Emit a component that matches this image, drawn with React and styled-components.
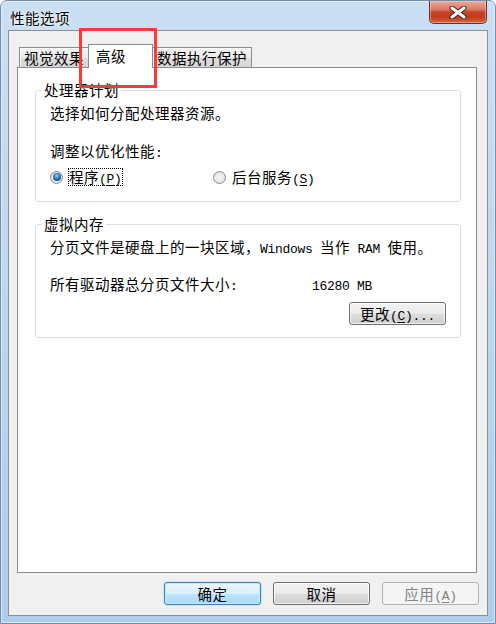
import React from 'react'
import styled, {createGlobalStyle, css} from 'styled-components'

const GlobalStyle = createGlobalStyle`
  html, body { margin:0; padding:0; background:#fff; }
  body {
    width:496px; height:624px; overflow:hidden;
    font-family:"Noto Sans CJK SC", "Microsoft YaHei", sans-serif;
  }
`;

const cjkText = css`
  font-family:"Noto Sans CJK SC", "Microsoft YaHei", sans-serif;
  font-size:14.5px;
  letter-spacing:.5px;
  color:#000;
  white-space:nowrap;
`;

const Window = styled.div`
  position:relative;
  box-sizing:border-box;
  width:496px;
  height:624px;
  display:flex;
  flex-direction:column;
  padding:0 7px 7px 7px;
  border:1px solid #6f8cab;
  border-radius:7px 7px 0 0;
  background:linear-gradient(180deg, #cadff3 0%, #c0d8f0 40%, #aecdec 100%);
  box-shadow:inset 0 0 0 1px rgba(255,255,255,.55);
`;

const TitleBar = styled.div`
  display:flex;
  align-items:flex-start;
  height:29px;
`;

const Title = styled.div`
  ${cjkText};
  margin:8px 0 0 2px;
  line-height:18px;
  text-shadow:0 0 6px rgba(255,255,255,.95), 0 0 2px rgba(255,255,255,.9);
`;

const CloseButton = styled.div`
  box-sizing:border-box;
  margin-left:auto;
  margin-right:1px;
  width:58px;
  height:23px;
  display:flex;
  align-items:center;
  justify-content:center;
  border:1px solid #6b3127;
  border-top:none;
  border-radius:0 0 5px 5px;
  background:linear-gradient(180deg, #e9aa9b 0%, #dc7c66 38%, #c7452a 50%, #c23a1f 72%, #d8623f 100%);
  box-shadow:inset 0 0 0 1px rgba(255,220,210,.45);
`;

const Client = styled.div`
  flex:1;
  display:flex;
  flex-direction:column;
  padding:13px 10px 0 8px;
  background:#f0f0f0;
  border:1px solid #8b9097;
`;

const TabRow = styled.div`
  position:relative;
  z-index:1;
  display:flex;
  align-items:flex-end;
  height:24px;
  margin-bottom:-1px;
  padding-left:2px;
`;

const Tab = styled.div`
  ${cjkText};
  box-sizing:border-box;
  height:20px;
  margin-bottom:1px;
  padding:0 4px;
  line-height:19px;
  border:1px solid #898c95;
  border-bottom:none;
  background:linear-gradient(180deg, #f3f3f3 0%, #ebebeb 50%, #dedede 51%, #d6d6d6 100%);
  box-shadow:inset 1px 1px 0 rgba(255,255,255,.8);
  & + & { margin-left:-1px; }
  ${p => p.$active && css`
    position:relative;
    height:24px;
    margin-bottom:0;
    min-width:65px;
    padding:0 7px;
    line-height:22px;
    background:#fff;
    box-shadow:none;
  `}
`;

const Panel = styled.div`
  flex:1;
  box-sizing:border-box;
  padding:13px 15px 0 17px;
  background:#fff;
  border:1px solid #898c95;
`;

const Group = styled.fieldset`
  margin:0;
  min-width:0;
  padding:5px 14px ${p => p.$pb}px 14px;
  border:1px solid #d5dfe5;
  border-radius:3px;
  & + & { margin-top:13px; }
`;

const Legend = styled.legend`
  ${cjkText};
  margin-left:-8px;
  padding:0 2px;
  line-height:18px;
`;

const Line = styled.div`
  ${cjkText};
  height:18px;
  margin-top:${p => p.$mt || 0}px;
  line-height:18px;
`;

const Latin = styled.span`
  font-family:"Liberation Mono", monospace;
  font-size:13px;
  line-height:1;
  letter-spacing:-.3px;
  u { text-underline-offset:2px; }
`;

const RadioRow = styled.div`
  display:grid;
  grid-template-columns:163px auto;
  margin-top:8px;
  height:18px;
`;

const RadioItem = styled.div`
  display:flex;
  align-items:center;
  gap:5px;
`;

const RadioCircle = styled.span`
  box-sizing:border-box;
  width:13px;
  height:13px;
  border-radius:50%;
  border:1px solid #8a8a8a;
  display:flex;
  align-items:center;
  justify-content:center;
  background:radial-gradient(circle at 50% 50%, #f7f7f7 0%, #e9e9e9 55%, #cfcfcf 100%);
  &::after {
    content:"";
    width:8px;
    height:8px;
    border-radius:50%;
    display:${p => (p.$checked ? 'block' : 'none')};
    background:radial-gradient(circle at 45% 35%, #a9dcf8 0%, #3d93cf 30%, #17528a 70%, #12385e 100%);
  }
`;

const RadioLabel = styled.span`
  ${cjkText};
  height:18px;
  padding:0 1px;
  line-height:18px;
  box-sizing:border-box;
  outline:${p => (p.$focus ? '1px dotted #000' : 'none')};
  outline-offset:-1px;
`;

const InfoRow = styled.div`
  ${cjkText};
  display:grid;
  grid-template-columns:262px auto;
  height:18px;
  margin-top:19px;
  line-height:18px;
`;

const Cell = styled.span`
  line-height:18px;
`;

const ButtonRow = styled.div`
  display:flex;
  justify-content:flex-end;
  gap:11px;
  margin-top:${p => p.$mt || 0}px;
`;

const Footer = styled(ButtonRow)`
  gap:12px;
  margin:9px -2px 10px 0;
`;

const Button = styled.button`
  ${cjkText};
  box-sizing:border-box;
  width:97px;
  height:23px;
  padding:0;
  line-height:20px;
  border:1px solid #707070;
  border-radius:3px;
  background:linear-gradient(180deg, #f2f2f2 0%, #ebebeb 50%, #dddddd 51%, #cfcfcf 100%);
  box-shadow:inset 0 0 0 1px rgba(255,255,255,.75);
  ${p => p.$default && css`
    border-color:#3c7fb1;
    background:linear-gradient(180deg, #eaf6fd 0%, #d9f0fc 50%, #bee6fd 51%, #a7d9f5 100%);
    box-shadow:inset 0 0 0 1px #c8ebfb, 0 0 2px #8fcdf0;
  `}
  ${p => p.disabled && css`
    border-color:#adb2b5;
    background:#f4f4f4;
    color:#838383;
    box-shadow:none;
  `}
`;

const Annotation = styled.div`
  position:absolute;
  left:78px;
  top:27px;
  width:78px;
  height:60px;
  box-sizing:border-box;
  border:3px solid #fd3a3a;
  pointer-events:none;
  z-index:5;
`;

const CloseIcon = () => (
  <svg width="18" height="13" viewBox="0 0 18 13">
    <path d="M3 2 L15 11 M15 2 L3 11" stroke="#3b2320" strokeWidth="5" strokeLinecap="round" fill="none" />
    <path d="M3 2 L15 11 M15 2 L3 11" stroke="#ffffff" strokeWidth="3" strokeLinecap="round" fill="none" />
  </svg>
);

const Radio = ({checked, focus, children}) => (
  <RadioItem>
    <RadioCircle $checked={checked} />
    <RadioLabel $focus={focus}>{children}</RadioLabel>
  </RadioItem>
);

export default function App() {
  return (
    <>
      <GlobalStyle />
      <Window>
        <TitleBar>
          <Title>性能选项</Title>
          <CloseButton><CloseIcon /></CloseButton>
        </TitleBar>
        <Client>
          <TabRow>
            <Tab>视觉效果</Tab>
            <Tab $active>高级</Tab>
            <Tab>数据执行保护</Tab>
          </TabRow>
          <Panel>
            <Group $pb={15}>
              <Legend>处理器计划</Legend>
              <Line>选择如何分配处理器资源。</Line>
              <Line $mt={20}>调整以优化性能<Latin>:</Latin></Line>
              <RadioRow>
                <Radio checked focus>程序<Latin>(<u>P</u>)</Latin></Radio>
                <Radio>后台服务<Latin>(<u>S</u>)</Latin></Radio>
              </RadioRow>
            </Group>
            <Group $pb={12}>
              <Legend>虚拟内存</Legend>
              <Line>分页文件是硬盘上的一块区域，<Latin>Windows </Latin>当作<Latin> RAM </Latin>使用。</Line>
              <InfoRow>
                <Cell>所有驱动器总分页文件大小<Latin>:</Latin></Cell>
                <Cell><Latin>16280 MB</Latin></Cell>
              </InfoRow>
              <ButtonRow $mt={9}>
                <Button>更改<Latin>(<u>C</u>)...</Latin></Button>
              </ButtonRow>
            </Group>
          </Panel>
          <Footer>
            <Button $default>确定</Button>
            <Button>取消</Button>
            <Button disabled>应用<Latin>(<u>A</u>)</Latin></Button>
          </Footer>
        </Client>
        <Annotation />
      </Window>
    </>
  );
}
